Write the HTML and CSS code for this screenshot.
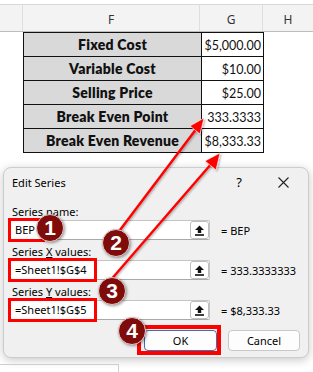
FILE: index.html
```html
<!DOCTYPE html>
<html lang="en">
<head>
    <meta charset="UTF-8">
    <title>Edit Series</title>
    <link rel="stylesheet" href="styles.css">
</head>
<body>
    <div class="sheet">
        <div class="colhead">
            <div class="col corner"></div>
            <div class="col col-f">F</div>
            <div class="col col-g">G</div>
            <div class="col col-h">H</div>
        </div>
        <table class="grid">
            <tr><th>Fixed Cost</th><td>$5,000.00</td></tr>
            <tr><th>Variable Cost</th><td>$10.00</td></tr>
            <tr><th>Selling Price</th><td>$25.00</td></tr>
            <tr><th>Break Even Point</th><td>333.3333</td></tr>
            <tr><th>Break Even Revenue</th><td>$8,333.33</td></tr>
        </table>
    </div>

    <div class="dialog">
        <div class="titlebar">
            <span class="title">Edit Series</span>
            <span class="help">?</span>
            <svg class="close" width="11" height="11" viewBox="0 0 11 11">
                <path d="M0.5 0.5 L10.5 10.5 M10.5 0.5 L0.5 10.5" stroke="#222" stroke-width="1.1" fill="none"/>
            </svg>
        </div>
        <div class="dbody">
            <p class="label">Series name:</p>
            <div class="field">
                <div class="inputbox">
                    <span class="val hl">BEP</span>
                    <span class="pick">
                        <svg width="11" height="11" viewBox="0 0 11 11"><path d="M5.5 0.5 L1 5 H3.8 V8 H7.2 V5 H10 Z" fill="#111"/><rect x="1" y="9.2" width="9" height="1.6" fill="#111"/></svg>
                    </span>
                </div>
                <span class="result">= BEP</span>
            </div>
            <p class="label">Series <u>X</u> values:</p>
            <div class="field">
                <div class="inputbox">
                    <span class="val hl">=Sheet1!$G$4</span>
                    <span class="pick">
                        <svg width="11" height="11" viewBox="0 0 11 11"><path d="M5.5 0.5 L1 5 H3.8 V8 H7.2 V5 H10 Z" fill="#111"/><rect x="1" y="9.2" width="9" height="1.6" fill="#111"/></svg>
                    </span>
                </div>
                <span class="result">= 333.3333333</span>
            </div>
            <p class="label">Series <u>Y</u> values:</p>
            <div class="field">
                <div class="inputbox">
                    <span class="val hl">=Sheet1!$G$5</span>
                    <span class="pick">
                        <svg width="11" height="11" viewBox="0 0 11 11"><path d="M5.5 0.5 L1 5 H3.8 V8 H7.2 V5 H10 Z" fill="#111"/><rect x="1" y="9.2" width="9" height="1.6" fill="#111"/></svg>
                    </span>
                </div>
                <span class="result">= $8,333.33</span>
            </div>
            <div class="buttons">
                <div class="okwrap">
                    <button class="btn btn-ok">OK</button>
                    <span class="okmark"></span>
                </div>
                <button class="btn">Cancel</button>
            </div>
        </div>
    </div>

    <div class="tab"></div>

    <!-- annotation overlay -->
    <svg class="arrows" width="313" height="372" viewBox="0 0 313 372">
        <defs>
            <filter id="sh" x="-20%" y="-20%" width="140%" height="140%">
                <feDropShadow dx="1" dy="1" stdDeviation="0.8" flood-color="#000" flood-opacity="0.35"/>
            </filter>
        </defs>
        <g filter="url(#sh)" stroke="#fff" stroke-width="0.6">
            <path d="M117 234 L197 128" stroke="#f00" stroke-width="2.4" fill="none"/>
            <path d="M204 118 L200 134 L190 126 Z" fill="#f00"/>
            <path d="M109 282 L212 163" stroke="#f00" stroke-width="2.4" fill="none"/>
            <path d="M220 153 L216 170 L205 161 Z" fill="#f00"/>
        </g>
    </svg>

    <span class="badge b1">1</span>
    <span class="badge b2">2</span>
    <span class="badge b3">3</span>
    <span class="badge b4">4</span>
</body>
</html>
```

FILE: styles.css
```css
body {
    margin: 0;
    width: 313px;
    height: 372px;
    overflow: hidden;
    position: relative;
    background: #ffffff;
    font-family: 'Noto Sans', sans-serif;
    color: #000;
}

.sheet {
    padding-top: 4px;
}

.colhead {
    display: flex;
    height: 26px;
    background: #f3f3f3;
    border-top: 1px solid #d8d8d8;
    border-bottom: 1px solid #bdbdbd;
    font-size: 12px;
    color: #333;
}

.col {
    display: flex;
    align-items: center;
    justify-content: center;
    border-right: 1px solid #dedede;
    padding-top: 3px;
    box-sizing: border-box;
}

.corner { width: 23px; }
.col-f { width: 177px; }
.col-g { width: 63px; }
.col-h { flex: 1; border-right: none; }

.grid {
    margin-left: 23px;
    border-collapse: collapse;
    table-layout: fixed;
    width: 241px;
    font-family: Lato, sans-serif;
    font-size: 12.5px;
    color: #111;
}

.grid tr {
    height: 24px;
}

.grid th,
.grid td {
    border: 1px solid #111;
    padding: 0;
    line-height: 14px;
}

.grid th {
    width: 177px;
    background: #d9d9d9;
    font-size: 14px;
    font-weight: 800;
    letter-spacing: 0.25px;
    text-align: center;
}

.grid td {
    text-align: right;
    padding: 2px 2px 0 0;
}

.dialog {
    margin: 14px 0 0 3px;
    width: 306px;
    height: 191px;
    box-sizing: border-box;
    background: #f0f0f0;
    border: 1px solid #cdcdcd;
    border-radius: 8px;
    box-shadow: 0 2px 10px rgba(0, 0, 0, 0.22);
    font-size: 11px;
}

.titlebar {
    display: flex;
    align-items: center;
    height: 28px;
    padding-left: 8px;
}

.title {
    flex: 1;
}

.help {
    font-size: 13px;
    margin-right: 36px;
}

.close {
    margin-right: 19px;
}

.dbody {
    padding: 0 8px 0 6px;
}

.label {
    margin: 8px 0 0 2px;
    height: 16px;
    line-height: 16px;
}

.field + .label { margin-top: 4px; }

.field {
    display: flex;
    align-items: center;
}

.inputbox {
    width: 200px;
    height: 20px;
    box-sizing: border-box;
    background: #fff;
    border: 1px solid #c4c4c4;
    border-bottom-color: #a9a9a9;
    border-radius: 2px;
    display: flex;
    align-items: center;
    justify-content: space-between;
}

.val {
    display: inline-block;
    height: 18px;
    line-height: 18px;
    padding: 0 7px 0 4px;
}

.hl {
    outline: 3px solid #ff0000;
    outline-offset: 0;
}

.pick {
    width: 19px;
    height: 18px;
    box-sizing: border-box;
    border: 1px solid #bdbdbd;
    border-radius: 3px;
    background: #fff;
    display: flex;
    align-items: center;
    justify-content: center;
}

.result {
    margin-left: 11px;
}

.buttons {
    display: flex;
    justify-content: flex-end;
    gap: 11px;
    margin-top: 10px;
}

.btn {
    width: 72px;
    height: 21px;
    box-sizing: border-box;
    background: #fdfdfd;
    border: 1px solid #c8c8c8;
    border-radius: 4px;
    font-family: 'Noto Sans', sans-serif;
    font-size: 11px;
    padding: 0;
    color: #000;
}

.btn-ok {
    width: 73px;
    border-color: #3f6fae;
}

.okwrap {
    position: relative;
    display: flex;
}

.okmark {
    position: absolute;
    left: -7px;
    top: -5px;
    right: -4px;
    bottom: -4px;
    border: 4px solid #ff0000;
    box-sizing: border-box;
}

.tab {
    margin-top: 6px;
    width: 118px;
    height: 10px;
    border-top: 1px solid #cfcfcf;
    border-right: 1px solid #cfcfcf;
}

.arrows {
    position: absolute;
    left: 0;
    top: 0;
    pointer-events: none;
}

.badge {
    position: absolute;
    width: 28px;
    height: 28px;
    box-sizing: border-box;
    border-radius: 50%;
    background: #800b0b;
    border: 1px solid #e8c8c8;
    box-shadow: 1px 1px 3px rgba(0, 0, 0, 0.4);
    color: #fff;
    font-family: 'Liberation Sans', Arial, sans-serif;
    font-weight: bold;
    font-size: 21px;
    line-height: 26px;
    text-align: center;
}

.b1 { left: 36px; top: 214px; }
.b2 { left: 102px; top: 229px; }
.b3 { left: 98px; top: 277px; }
.b4 { left: 118px; top: 317px; }
```
